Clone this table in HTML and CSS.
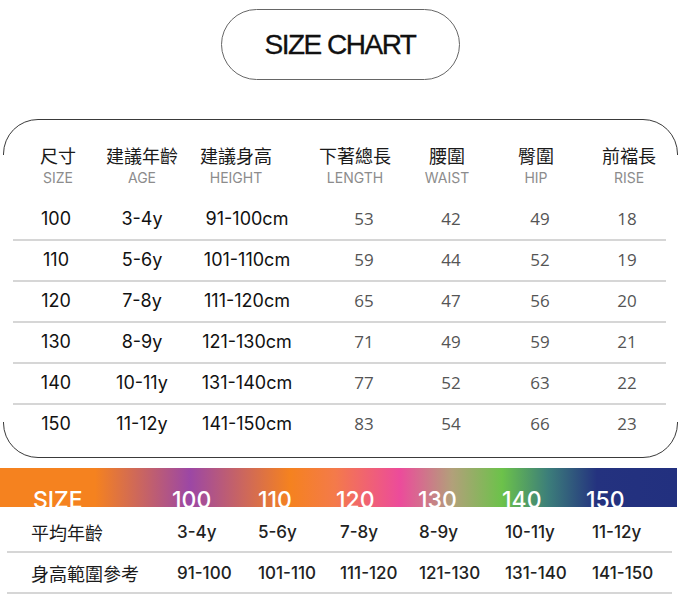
FILE: index.html
```html
<!DOCTYPE html>
<html lang="zh-Hant">
<head>
<meta charset="utf-8">
<title>Size Chart</title>
<link rel="stylesheet" href="styles.css">
</head>
<body>
<div class="title-wrap"><div class="title-pill">SIZE CHART</div></div>

<section class="frame">
  <div class="head">
    <div class="head-zh">
      <span>尺寸</span><span>建議年齡</span><span>建議身高</span><span>下著總長</span><span>腰圍</span><span>臀圍</span><span>前襠長</span>
    </div>
    <div class="head-en">
      <span>SIZE</span><span>AGE</span><span>HEIGHT</span><span>LENGTH</span><span>WAIST</span><span>HIP</span><span>RISE</span>
    </div>
  </div>
  <div class="rows">
    <div class="row"><span class="g">100</span><span class="g">3-4y</span><span class="g">91-100cm</span><span class="n">53</span><span class="n">42</span><span class="n">49</span><span class="n">18</span></div>
    <div class="row"><span class="g">110</span><span class="g">5-6y</span><span class="g">101-110cm</span><span class="n">59</span><span class="n">44</span><span class="n">52</span><span class="n">19</span></div>
    <div class="row"><span class="g">120</span><span class="g">7-8y</span><span class="g">111-120cm</span><span class="n">65</span><span class="n">47</span><span class="n">56</span><span class="n">20</span></div>
    <div class="row"><span class="g">130</span><span class="g">8-9y</span><span class="g">121-130cm</span><span class="n">71</span><span class="n">49</span><span class="n">59</span><span class="n">21</span></div>
    <div class="row"><span class="g">140</span><span class="g">10-11y</span><span class="g">131-140cm</span><span class="n">77</span><span class="n">52</span><span class="n">63</span><span class="n">22</span></div>
    <div class="row last"><span class="g">150</span><span class="g">11-12y</span><span class="g">141-150cm</span><span class="n">83</span><span class="n">54</span><span class="n">66</span><span class="n">23</span></div>
  </div>
</section>

<div class="band">
  <span>SIZE</span><span>100</span><span>110</span><span>120</span><span>130</span><span>140</span><span>150</span>
</div>
<div class="brow first">
  <span class="lbl">平均年齡</span><span>3-4y</span><span>5-6y</span><span>7-8y</span><span>8-9y</span><span>10-11y</span><span>11-12y</span>
</div>
<div class="brow">
  <span class="lbl">身高範圍參考</span><span>91-100</span><span>101-110</span><span>111-120</span><span>121-130</span><span>131-140</span><span>141-150</span>
</div>
</body>
</html>
```

FILE: styles.css
```css
html, body {
  margin: 0;
  padding: 0;
  background: #fff;
}
body {
  width: 680px;
  height: 609px;
  overflow: hidden;
  font-family: Inter, "Noto Sans CJK TC", sans-serif;
  color: #111;
}

.title-wrap {
  display: flex;
  justify-content: center;
  padding-top: 9px;
}
.title-pill {
  box-sizing: border-box;
  width: 239px;
  height: 71px;
  border: 1px solid #666;
  border-radius: 36px;
  display: flex;
  align-items: center;
  justify-content: center;
  font-family: "Liberation Sans", Arial, sans-serif;
  font-size: 28px;
  letter-spacing: -1.5px;
  color: #111;
  -webkit-text-stroke: 0.3px #111;
}

.frame {
  position: relative;
  box-sizing: border-box;
  margin: 39px 2px 0 3px;
  height: 339px;
  border: 1px solid #3a3a3a;
  border-radius: 35px;
  padding: 23px 11px 11px 9px;
}
.frame::before,
.frame::after {
  content: "";
  position: absolute;
  top: 35px;
  bottom: 35px;
  width: 3px;
  background: #fff;
}
.frame::before { left: -2px; }
.frame::after { right: -2px; }

.head-zh, .head-en {
  display: grid;
  grid-template-columns: 90px 78px 110px 128px 56px 122px 64px;
  text-align: center;
  white-space: nowrap;
}
.head-zh {
  font-family: "Noto Sans CJK TC", sans-serif;
  font-size: 18px;
  line-height: 24px;
  color: #1a1a1a;
}
.head-en {
  margin-top: 2px;
  font-size: 14px;
  line-height: 18px;
  color: #8c8c8c;
  font-weight: 400;
}

.rows {
  margin-top: 13px;
}
.row {
  box-sizing: border-box;
  height: 41px;
  display: grid;
  grid-template-columns: 86px 86px 124px 110px 64px 114px 60px;
  align-items: center;
  text-align: center;
  white-space: nowrap;
  border-bottom: 2px solid #d6d6d6;
  padding-bottom: 2px;
}
.row.last {
  border-bottom: 0;
  padding-bottom: 4px;
}
.row .g {
  font-family: Inter, sans-serif;
  font-size: 18px;
  color: #111;
}
.row .n {
  font-family: "Open Sans", sans-serif;
  font-size: 17px;
  color: #555;
}

.band {
  box-sizing: border-box;
  margin: 10px 3px 0 0;
  height: 39px;
  overflow: hidden;
  display: grid;
  grid-template-columns: 139px 86px 78px 82px 84px 84px 1fr;
  align-items: end;
  padding-left: 33px;
  background: linear-gradient(to right,
    #f5821f 0px, #f5821f 95px, #9c47a5 190px, #f5821f 290px,
    #f47a4a 335px, #ec4b9b 400px, #b2a07a 452px, #6cc24a 502px,
    #3c7e7a 548px, #24327f 597px, #22307f 100%);
  color: #fff;
  font-family: Inter, sans-serif;
  font-size: 23px;
  font-weight: 500;
  line-height: 1;
}
.band span {
  margin-bottom: -5px;
}

.brow {
  box-sizing: border-box;
  margin: 0 8px 0 7px;
  height: 41px;
  display: grid;
  grid-template-columns: 146px 81px 82px 79px 86px 87px 1fr;
  align-items: center;
  padding-left: 24px;
  border-bottom: 2px solid #d6d6d6;
  font-family: Inter, sans-serif;
  font-size: 17px;
  font-weight: 500;
  color: #222;
  white-space: nowrap;
}
.brow.first {
  height: 46px;
  padding-top: 5px;
}
.brow .lbl {
  font-family: "Noto Sans CJK TC", sans-serif;
  font-size: 18px;
  font-weight: 400;
  color: #1a1a1a;
}
```
